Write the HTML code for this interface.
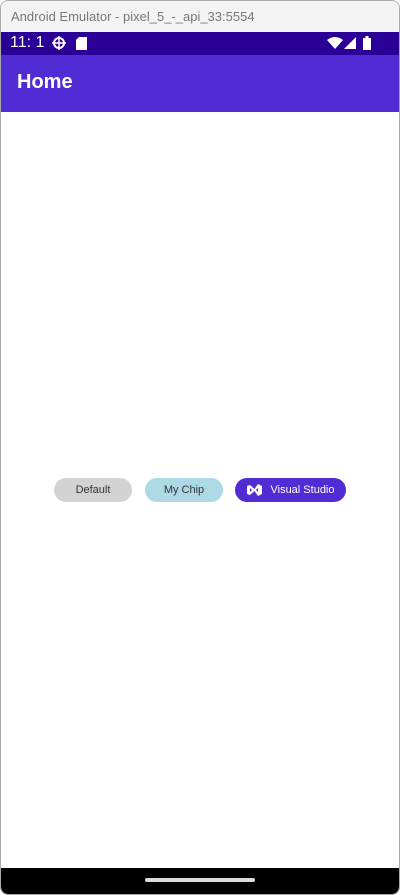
<!DOCTYPE html>
<html><head><meta charset="utf-8"><style>
*{margin:0;padding:0;box-sizing:border-box}
body{width:400px;height:895px;background:#fff;font-family:"Liberation Sans",sans-serif;position:relative;overflow:hidden}
.win{position:absolute;inset:0;border:1px solid #aaa;border-radius:8px;overflow:hidden;background:#fff}
.title{height:31px;background:#f3f3f3;color:#777;font-size:13px;padding:8px 0 0 10px}
.status{height:23px;background:#2b0096;color:#fff;font-size:16px;padding:2px 0 0 9px;position:relative}
.appbar{height:57px;background:#512bd4;color:#fff;font-size:20px;font-weight:bold;padding:16px 0 0 16px}
.chip{position:absolute;top:477px;height:24px;border-radius:12px;font-size:11px;line-height:24px;text-align:center;color:#333}
.nav{position:absolute;left:0;right:0;top:867px;bottom:0;background:#000;border-radius:0 0 7px 7px}
.nav div{position:absolute;left:144px;top:10px;width:110px;height:4px;border-radius:2px;background:#ddd}
</style></head><body><div class="win">
<div class="title">Android Emulator - pixel_5_-_api_33:5554</div>
<div class="status">11: 1
<svg style="position:absolute;left:51px;top:4px" width="14" height="14" viewBox="0 0 14 14"><circle cx="7" cy="7" r="5" fill="none" stroke="#fff" stroke-width="2"/><path d="M7 0v14M0 7h14" stroke="#fff" stroke-width="1.5"/></svg>
<svg style="position:absolute;left:75px;top:5px" width="11" height="13" viewBox="0 0 11 13"><path d="M3 0h8v13H0V3z" fill="#fff"/></svg>
<svg style="position:absolute;left:326px;top:5px" width="16" height="12" viewBox="0 0 16 12"><path d="M0 3Q8-3 16 3L8 12z" fill="#fff"/></svg>
<svg style="position:absolute;left:343px;top:5px" width="12" height="12" viewBox="0 0 12 12"><path d="M12 0V12H0z" fill="#fff"/></svg>
<svg style="position:absolute;left:362px;top:4px" width="8" height="14" viewBox="0 0 8 14"><path d="M2.5 0h3v2H8v12H0V2h2.5z" fill="#fff"/></svg>
</div>
<div class="appbar">Home</div>
<div class="chip" style="left:53px;width:78px;background:#d3d3d3">Default</div>
<div class="chip" style="left:144px;width:78px;background:#add8e6">My Chip</div>
<div class="chip" style="left:234px;width:111px;background:#512bd4;color:#fff;padding-left:24px">Visual Studio
<svg style="position:absolute;left:12px;top:6px" width="15" height="12" viewBox="0 0 15 12"><path d="M0 2L3 1 7.5 5 11 0 15 2V10L11 12 7.5 7 3 11 0 10Z M3 4V8L5 6Z M11 4V8L9 6Z" fill="#fff" fill-rule="evenodd"/></svg></div>
<div class="nav"><div></div></div>
</div></body></html>
